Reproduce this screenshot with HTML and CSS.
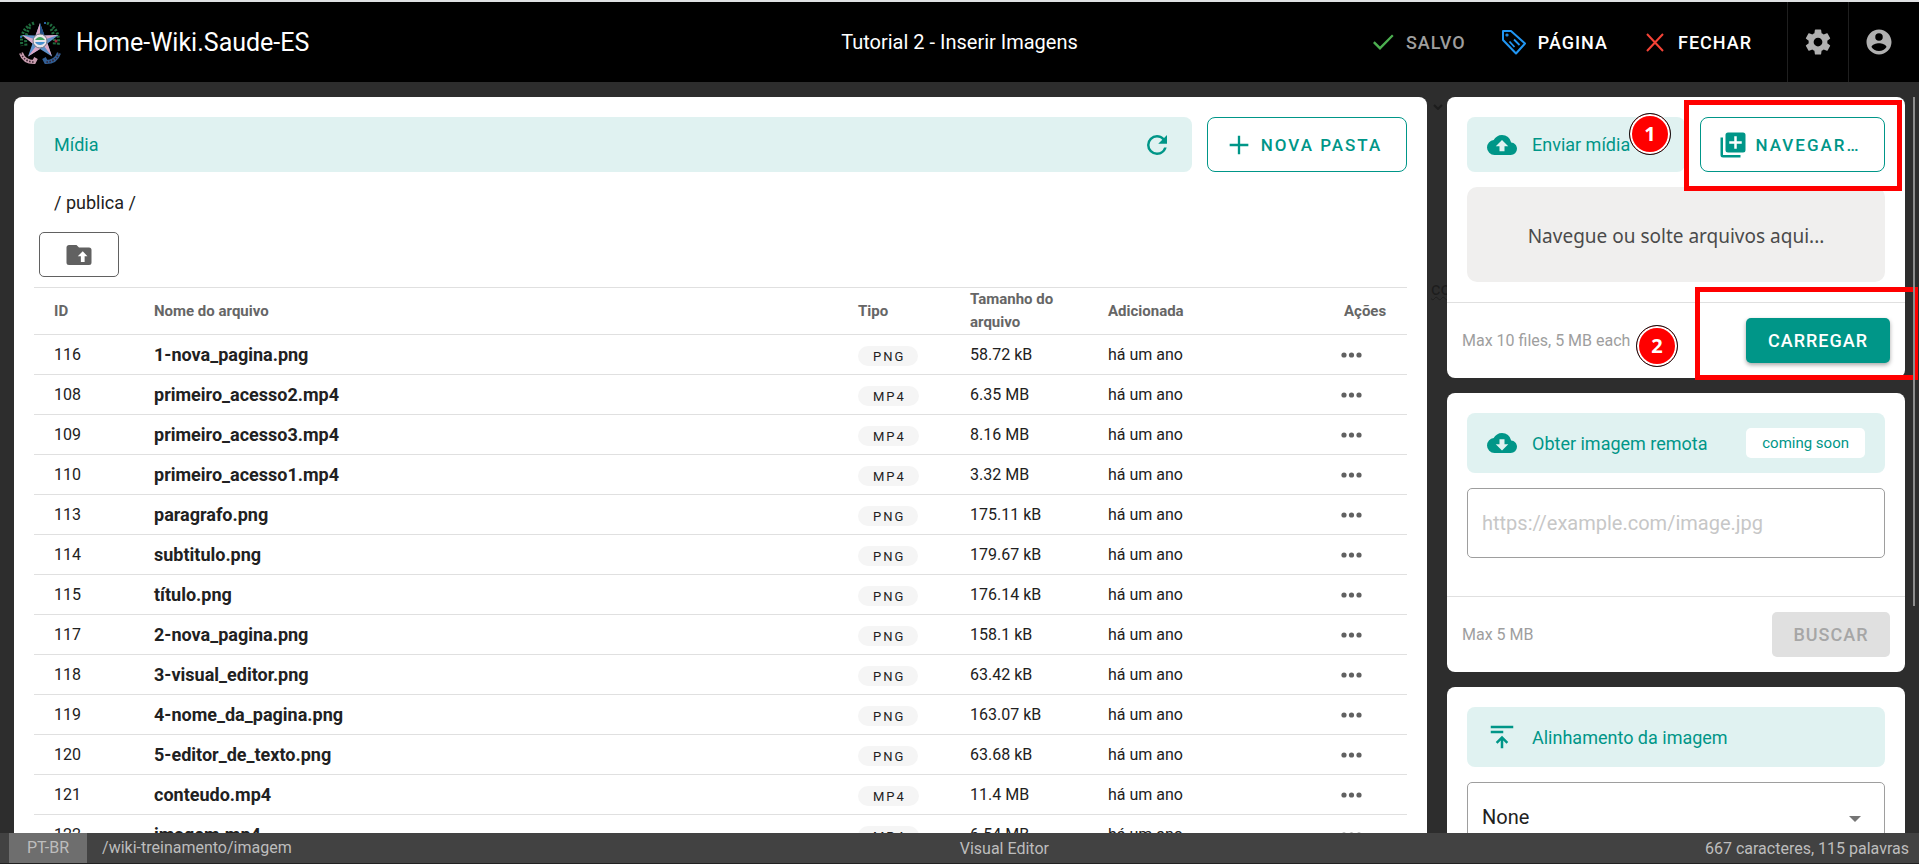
FILE: index.html
```html
<!DOCTYPE html>
<html lang="pt-BR">
<head>
<meta charset="utf-8">
<title>Tutorial 2 - Inserir Imagens</title>
<link rel="stylesheet" href="styles.css">
</head>
<body>
<div class="app">
  <header class="topbar">
    <a class="brand" href="#">
      <svg class="brand-logo" viewBox="0 0 44 46" aria-hidden="true">
        <g fill="none" stroke="#1f6b3d" stroke-width="3" stroke-dasharray="2 1.500">
          <path d="M16 4C6 8 2 16 4 27"/><path d="M29 4c9 4 13 12 11 23"/><path d="M12 8C8 14 7 20 8 27"/><path d="M33 10c3 5 4 11 3 17"/>
        </g>
        <path fill="#5d91c9" d="M22 4l4.500 12.500 14-.5-11 8.500 4.500 13L22 30l-12 7.500 4.500-13L4 16l13.500.5z"/>
        <path fill="#dba8c6" d="M22 4v18l-4.500-5.500zM4 16l18 6-7.500 2.500zM10 37.500L22 22v8zM34 37.500L22 22l7.500 2.500zM40.500 16L22 22l4.500-5.500z"/>
        <path fill="#26538c" d="M22 4v18l4.500-5.500z"/>
        <circle cx="22" cy="22" r="7" fill="#e9e4ea" stroke="#6c7484"/>
        <path fill="#3fa35c" d="M17 21c3-4 7-4 10 0z"/><path fill="#4590d0" d="M17 23h10c-2 4-8 4-10 0z"/>
        <path fill="none" stroke="#c79cae" stroke-width="4" d="M3 34c2 6 7 9 13 9l2-4"/>
        <path fill="none" stroke="#315f96" stroke-width="4" d="M41 34c-2 6-7 9-13 9l-2-4"/>
        <path fill="none" stroke="#3a2430" stroke-width="1.500" stroke-dasharray="1.500 1.500" d="M3 34c2 6 7 9 13 9M41 34c-2 6-7 9-13 9"/>
        <circle cx="27" cy="4" r="1" fill="#367fd3"/><circle cx="38" cy="22" r="1.500" fill="#a1263f"/><circle cx="3" cy="18" r="1" fill="#367fd3"/>
      </svg>
      <span>Home-Wiki.Saude-ES</span>
    </a>
    <h1 class="page-title">Tutorial 2 - Inserir Imagens</h1>
    <div class="topbar-end">
      <button class="bar-btn bar-btn-off" type="button" disabled>
        <svg class="icon icon-check" viewBox="0 0 24 24"><path d="M21 4.500L9 16.600l-5.300-5.300-1.700 1.700 7 7L22.600 6.100z"/></svg>Salvo
      </button>
      <button class="bar-btn" type="button">
        <svg class="icon icon-lg icon-line icon-tag" viewBox="0 0 26 26"><path d="M2 2h8L24 14.500 15 24.500 2 11z"/><circle cx="6" cy="6" r=".6"/><path stroke-width="1.800" d="M8.500 12.500l5 5.500M13 10.500l5.500 5.500"/></svg>Página
      </button>
      <button class="bar-btn" type="button">
        <svg class="icon icon-line icon-close" viewBox="0 0 24 24"><path d="M4 4l16 17M20 4L4 21"/></svg>Fechar
      </button>
      <button class="bar-icon" type="button" aria-label="Configurações">
        <svg class="icon icon-xl" viewBox="0 0 24 24"><path d="M12 15.500A3.500 3.500 0 0 1 8.500 12 3.500 3.500 0 0 1 12 8.500a3.500 3.500 0 0 1 3.500 3.500 3.500 3.500 0 0 1-3.500 3.500m7.430-2.530c.04-.32.07-.64.07-.97s-.03-.66-.07-1l2.110-1.630c.19-.15.24-.42.12-.64l-2-3.460c-.12-.22-.39-.31-.61-.22l-2.490 1c-.52-.39-1.060-.73-1.690-.98l-.37-2.650A.506.506 0 0 0 14 2h-4c-.25 0-.46.18-.5.42l-.37 2.650c-.63.25-1.170.59-1.690.98l-2.490-1c-.22-.09-.49 0-.61.22l-2 3.460c-.13.22-.07.49.12.64L4.570 11c-.04.34-.07.67-.07 1s.03.65.07.97l-2.110 1.660c-.19.15-.25.42-.12.64l2 3.460c.12.22.39.3.61.22l2.490-1.010c.52.4 1.060.74 1.690.99l.37 2.650c.04.24.25.42.5.42h4c.25 0 .46-.18.5-.42l.37-2.650c.63-.26 1.170-.59 1.690-.99l2.490 1.010c.22.08.49 0 .61-.22l2-3.460c.12-.22.07-.49-.12-.64z"/></svg>
      </button>
      <button class="bar-icon" type="button" aria-label="Conta">
        <svg class="icon icon-xl" viewBox="0 0 24 24"><path d="M12 19.200c-2.500 0-4.710-1.280-6-3.200.03-2 4-3.100 6-3.100s5.970 1.100 6 3.100a7.232 7.232 0 0 1-6 3.200M12 5a3 3 0 0 1 3 3 3 3 0 0 1-3 3 3 3 0 0 1-3-3 3 3 0 0 1 3-3m0-3A10 10 0 0 0 2 12a10 10 0 0 0 10 10 10 10 0 0 0 10-10c0-5.530-4.500-10-10-10z"/></svg>
      </button>
    </div>
  </header>

  <main class="workspace">
    <div class="backdrop" aria-hidden="true"><svg class="backdrop-caret" viewBox="0 0 10 6"><path d="M1 1l4 4 4-4"/></svg><span class="backdrop-text">co</span></div>
    <section class="card library">
      <div class="head-row">
        <div class="banner"><h2>Mídia</h2>
          <button class="plain" type="button" aria-label="Atualizar"><svg class="icon icon-xl" viewBox="0 0 24 24"><path d="M17.650 6.350C16.200 4.900 14.210 4 12 4a8 8 0 0 0-8 8 8 8 0 0 0 8 8c3.730 0 6.840-2.550 7.730-6h-2.080A5.990 5.990 0 0 1 12 18a6 6 0 0 1-6-6 6 6 0 0 1 6-6c1.660 0 3.140.69 4.220 1.780L13 11h7V4z"/></svg></button>
        </div>
        <button class="btn btn-outline" type="button"><svg class="icon icon-plus" viewBox="0 0 24 24"><path d="M20 13h-7v7h-2v-7H4v-2h7V4h2v7h7z"/></svg>Nova pasta</button>
      </div>
      <nav class="crumbs">/ publica /</nav>
      <button class="up-btn" type="button" aria-label="Pasta acima"><svg class="icon icon-xl" viewBox="0 0 24 24"><path d="M20 6a2 2 0 0 1 2 2v10a2 2 0 0 1-2 2H4a2 2 0 0 1-2-2V6c0-1.110.89-2 2-2h6l2 2zm-1.250 7L15 9l-4 4h2.500v4.500h3V13z"/></svg></button>
      <table class="files">
        <thead><tr><th class="c-id">ID</th><th>Nome do arquivo</th><th class="c-type">Tipo</th><th class="c-size">Tamanho do arquivo</th><th class="c-date">Adicionada</th><th class="c-act">Ações</th></tr></thead>
        <tbody id="rows"></tbody>
      </table>
    </section>

    <aside class="side">
      <section class="card">
        <div class="card-body">
          <div class="head-row">
            <div class="banner"><svg class="icon icon-xl" viewBox="0 0 24 24"><path d="M14 13v4h-4v-4H7l5-5 5 5m2.350-2.970A7.490 7.490 0 0 0 12 4C9.110 4 6.600 5.640 5.350 8.030A6.004 6.004 0 0 0 0 14a6 6 0 0 0 6 6h13a5 5 0 0 0 5-5c0-2.640-2.050-4.780-4.650-4.970z"/></svg><h2>Enviar mídia</h2><span class="step step-one">1</span></div>
            <button class="btn btn-outline btn-browse" type="button"><svg class="icon icon-xl" viewBox="0 0 24 24"><path d="M19 11h-4v4h-2v-4H9V9h4V5h2v4h4m1-7H8a2 2 0 0 0-2 2v12a2 2 0 0 0 2 2h12a2 2 0 0 0 2-2V4a2 2 0 0 0-2-2M4 6H2v14a2 2 0 0 0 2 2h14v-2H4z"/></svg>Navegar…<span class="mark mark-browse"></span></button>
          </div>
          <div class="drop">Navegue ou solte arquivos aqui...</div>
        </div>
        <div class="card-foot"><span class="hint">Max 10 files, 5 MB each<span class="step step-two">2</span></span>
          <button class="btn btn-solid" type="button">Carregar<span class="mark mark-upload"></span></button></div>
      </section>

      <section class="card">
        <div class="card-body body-remote">
          <div class="banner banner-tall"><svg class="icon icon-xl" viewBox="0 0 24 24"><path d="M17 13l-5 5-5-5h3V9h4v4m5.350-2.970A7.490 7.490 0 0 0 12 4C9.110 4 6.600 5.640 5.350 8.030A6.004 6.004 0 0 0 0 14a6 6 0 0 0 6 6h13a5 5 0 0 0 5-5c0-2.640-2.050-4.780-4.650-4.970z"/></svg><h2>Obter imagem remota</h2><span class="soon">coming soon</span></div>
          <input class="field" type="url" aria-label="Endereço da imagem" placeholder="https://example.com/image.jpg">
        </div>
        <div class="card-foot"><span class="hint">Max 5 MB</span><button class="btn btn-disabled" type="button" disabled>Buscar</button></div>
      </section>

      <section class="card">
        <div class="card-body">
          <div class="banner banner-tall"><svg class="icon icon-xl" viewBox="0 0 24 24"><path d="M3 3h18v2H3zM3 7h10v2H3zM11 21v-6.200l-2.600 2.600L7 16l5-5 5 5-1.400 1.400-2.600-2.600V21z"/></svg><h2><label for="align">Alinhamento da imagem</label></h2></div>
          <div class="select-wrap"><select class="field" id="align"><option>None</option></select><svg class="caret" viewBox="0 0 12 6"><path d="M0 0h12L6 6z"/></svg></div>
        </div>
      </section>
    </aside>
    <div class="scroll-thumb"></div>
  </main>

  <footer class="status">
    <div class="status-start"><span class="locale">PT-BR</span><span>/wiki-treinamento/imagem</span></div>
    <span>Visual Editor</span>
    <span>667 caracteres, 115 palavras</span>
  </footer>
</div>
<script src="app.js"></script>
</body>
</html>
```
FILE: styles.css
```css
* { box-sizing: border-box; }
body { margin: 0; font-family: Roboto, "Noto Sans", sans-serif; font-size: 18px; color: #212121; background: #2d2d2d; }
button, input, select { font: inherit; color: inherit; margin: 0; }
button { cursor: pointer; padding: 0; background: none; border: 0; }
h1, h2 { margin: 0; font-size: inherit; font-weight: 400; }
.app { height: 100vh; display: flex; flex-direction: column; overflow: hidden; }
.icon { width: 24px; height: 24px; flex: none; fill: currentColor; }
.icon-lg { width: 26px; height: 26px; }
.icon-plus { width: 28px; height: 28px; }
.icon-xl { width: 30px; height: 30px; }
.icon-line { fill: none; stroke: currentColor; stroke-width: 2; stroke-linejoin: round; }
.icon-check { color: #4caf50; }
.icon-tag { color: #2196f3; }
.icon-close { color: #f44336; }

.topbar { flex: none; height: 82px; border-top: 2px solid #dfe1e3; background: #000; color: #fff; display: grid; grid-template-columns: 1fr auto 1fr; align-items: stretch; }
.brand { display: flex; align-items: center; gap: 14px; padding-left: 18px; font-size: 25px; color: #fff; text-decoration: none; }
.brand-logo { width: 44px; height: 46px; }
.page-title { align-self: center; font-size: 20px; }
.topbar-end { display: flex; justify-content: flex-end; padding-right: 10px; }
.bar-btn { display: flex; align-items: center; gap: 11px; margin-right: 35px; font-size: 18px; font-weight: 500; letter-spacing: 1px; text-transform: uppercase; color: #fff; }
.bar-btn-off { color: #9e9e9e; }
.bar-icon { width: 61px; display: flex; align-items: center; justify-content: center; border-left: 1px solid #1f1f1f; color: #b0b0b0; }

.workspace { position: relative; flex: 1; min-height: 0; display: grid; grid-template-columns: minmax(0, 1fr) 458px; gap: 20px; padding: 15px 14px 0; overflow: hidden; }
.backdrop { position: absolute; top: 22px; right: 464px; width: 28px; }
.backdrop-caret { display: block; width: 10px; height: 6px; margin-left: 6px; fill: none; stroke: #1d1d1d; stroke-width: 2; }
.backdrop-text { display: block; margin: 168px 0 0 4px; color: #1d1d1d; font-size: 18px; text-decoration: underline wavy 1px; }
.card { position: relative; background: #fff; border-radius: 8px; }
.library { padding: 20px; }
.head-row { display: flex; gap: 15px; }
.banner { position: relative; flex: 1; height: 55px; display: flex; align-items: center; gap: 15px; padding: 0 20px; border-radius: 8px; background: #e0f2f1; color: #009688; white-space: nowrap; }
.banner h2 { flex: 1; }
.banner-tall { height: 60px; }
.plain { display: flex; color: #009688; }
.btn { position: relative; height: 45px; padding: 0 20px; display: flex; align-items: center; justify-content: center; gap: 8px; border-radius: 5px; font-weight: 500; letter-spacing: 1px; text-transform: uppercase; white-space: nowrap; }
.btn-outline { height: 55px; min-width: 200px; padding: 0 23px 0 16px; border: 1px solid #009688; border-radius: 8px; color: #009688; font-size: 17px; letter-spacing: 2px; }
.btn-browse { min-width: 185px; }
.btn-solid { background: #009688; color: #fff; min-width: 144px; box-shadow: 0 2px 4px rgba(0, 0, 0, .35); }
.btn-disabled { min-width: 118px; background: #e0e0e0; color: #a6a6a6; }
.crumbs { padding: 19px 20px 18px; line-height: 23px; }
.up-btn { display: flex; align-items: center; justify-content: center; width: 80px; height: 45px; margin: 0 5px 10px; border: 1px solid #616161; border-radius: 5px; color: #616161; }

.files { width: 100%; table-layout: fixed; border-collapse: collapse; border-top: 1px solid #e0e0e0; text-align: left; font-size: 16px; }
.files th { height: 47px; padding: 0 20px; font-size: 15px; line-height: 23px; font-weight: 700; color: #666; }
.files td { height: 40px; padding: 0 20px; border-top: 1px solid #e0e0e0; white-space: nowrap; }
.files .name { font-size: 18px; font-weight: 700; }
.c-id { width: 100px; }
.c-type { width: 112px; }
.c-size { width: 138px; }
.c-date { width: 236px; }
.c-act { width: 83px; }
.chip { display: inline-block; height: 20px; padding: 0 13px 0 15px; border-radius: 10px; background: #f5f5f5; font-size: 13px; line-height: 21px; letter-spacing: 2px; vertical-align: -3px; }
.files .more { padding: 0 17px; }
.more button { display: block; }
.dots { display: block; width: 21px; height: 6px; fill: #616161; }

.side { display: flex; flex-direction: column; gap: 15px; }
.card-body { padding: 20px; }
.body-remote { padding-bottom: 38px; }
.drop { margin-top: 15px; padding: 35px 0 31px; border-radius: 10px; background: #f0efee; color: #4a4a4a; font-family: "Noto Sans", sans-serif; font-size: 19px; line-height: 29px; text-align: center; }
.card-foot { display: flex; align-items: center; justify-content: space-between; padding: 15px; border-top: 1px solid #e0e0e0; }
.hint { position: relative; font-size: 16px; color: #9e9e9e; }
.soon { padding: 0 16px; border-radius: 5px; background: #fff; font-size: 15px; line-height: 30px; }
.field { display: block; width: 100%; height: 70px; margin-top: 15px; padding: 0 14px; border: 1px solid #9e9e9e; border-radius: 5px; background: #fff; font-size: 20px; appearance: none; }
.field::placeholder { color: #c7c7c7; opacity: 1; }
.select-wrap { position: relative; }
.caret { position: absolute; right: 24px; top: 34px; width: 12px; height: 6px; fill: #757575; pointer-events: none; }

.step { position: absolute; width: 42px; height: 42px; border: 1px solid #111; border-radius: 50%; background: #f00; box-shadow: inset 0 0 0 2px #fff; color: #fff; font: 700 20px/40px "Noto Sans", sans-serif; text-align: center; }
.step-one { left: 162px; top: -4px; }
.step-two { left: 174px; top: -6px; }
.mark { position: absolute; border: 5px solid #f00; pointer-events: none; }
.mark-browse { inset: -18px -18px -20px -17px; }
.mark-upload { inset: -31px -28px -17px -51px; }
.scroll-thumb { position: absolute; top: 15px; right: 4px; width: 2px; height: 509px; background: #8c8c8c; }

.status { position: relative; flex: none; height: 31px; display: flex; align-items: center; justify-content: space-between; padding: 0 10px 0 9px; border-bottom: 1px solid #212121; background: #424242; color: #bdbdbd; font-size: 16px; }
.status-start { display: flex; gap: 15px; padding-right: 12px; line-height: 30px; }
.locale { padding: 0 18px; background: #6e6e6e; }
```
FILE: app.js
```js
const files = [
  [116, "1-nova_pagina.png", "58.72 kB"],
  [108, "primeiro_acesso2.mp4", "6.35 MB"],
  [109, "primeiro_acesso3.mp4", "8.16 MB"],
  [110, "primeiro_acesso1.mp4", "3.32 MB"],
  [113, "paragrafo.png", "175.11 kB"],
  [114, "subtitulo.png", "179.67 kB"],
  [115, "título.png", "176.14 kB"],
  [117, "2-nova_pagina.png", "158.1 kB"],
  [118, "3-visual_editor.png", "63.42 kB"],
  [119, "4-nome_da_pagina.png", "163.07 kB"],
  [120, "5-editor_de_texto.png", "63.68 kB"],
  [121, "conteudo.mp4", "11.4 MB"],
  [122, "imagem.mp4", "6.54 MB"]
];
document.getElementById("rows").innerHTML = files.map(([id, name, size]) => `
  <tr><td>${id}</td><td class="name">${name}</td>
  <td><span class="chip">${name.split(".").pop().toUpperCase()}</span></td>
  <td>${size}</td><td>há um ano</td>
  <td class="more"><button type="button" aria-label="Ações de ${name}"><svg class="dots" viewBox="0 0 21 6"><circle cx="3" cy="3" r="2.600"/><circle cx="10.500" cy="3" r="2.600"/><circle cx="18" cy="3" r="2.600"/></svg></button></td></tr>`).join("");
```
